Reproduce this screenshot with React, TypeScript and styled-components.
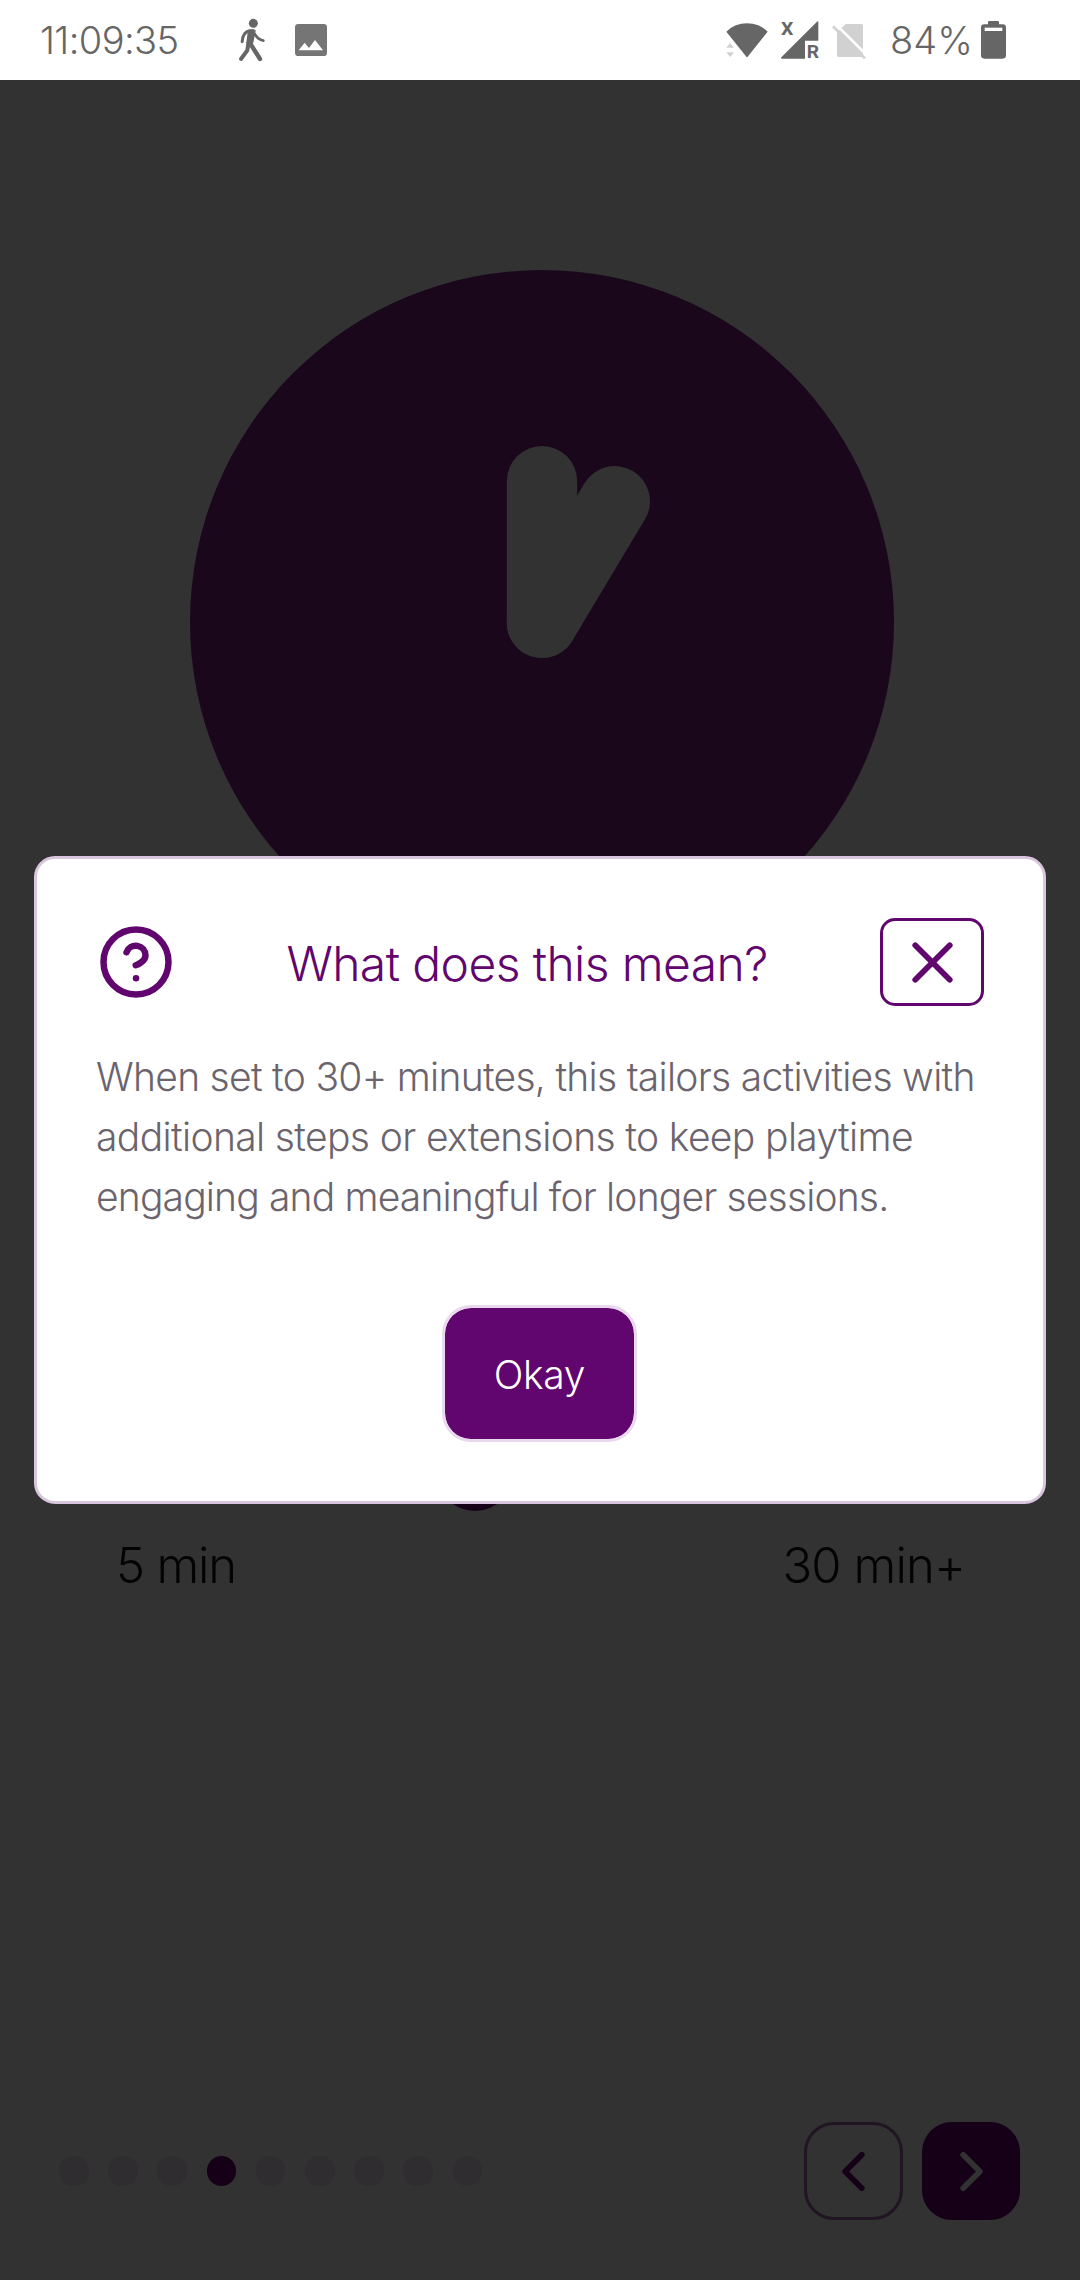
import React from "react";
import styled, { createGlobalStyle } from "styled-components";

const color = {
  purple: "#61056f",
  dimBackground: "#323232",
  dimClock: "#1a071c",
  dimPurple: "#150018",
  dimDot: "#302d30",
  statusIcon: "#666666",
  statusFaint: "#d1d1d1",
};

const GlobalStyle = createGlobalStyle`
  *, *::before, *::after { box-sizing: border-box; }
  body {
    margin: 0;
    background: ${color.dimBackground};
    font-family: Inter, "Liberation Sans", sans-serif;
    font-weight: 300;
  }
  button { font: inherit; padding: 0; background: none; border: 0; }
  svg { display: block; flex: none; }
`;

const Screen = styled.div`
  position: relative;
  width: 1080px;
  height: 2280px;
  display: flex;
  flex-direction: column;
  overflow: hidden;
`;

const StatusBar = styled.header`
  height: 80px;
  flex: none;
  display: flex;
  align-items: flex-start;
  padding: 0 74px 0 40px;
  background: #fff;
  color: ${color.statusIcon};
`;

const StatusText = styled.span<{ $spacing: number; $width: number }>`
  width: ${(p) => p.$width}px;
  padding-top: 10px;
  font-size: 38px;
  line-height: 60px;
  letter-spacing: ${(p) => p.$spacing}px;
  white-space: nowrap;
`;

const StatusSpacer = styled.div`
  flex: 1;
`;

const Page = styled.main`
  flex: 1;
  display: flex;
  flex-direction: column;
  padding-top: 190px;
  background: ${color.dimBackground};
`;

const ClockFace = styled.svg`
  width: 704px;
  height: 704px;
  margin-left: 190px;
`;

const Slider = styled.div`
  display: flex;
  margin-top: 459px;
  padding-left: 436px;
`;

const Thumb = styled.div`
  width: 78px;
  height: 78px;
  border-radius: 50%;
  background: ${color.dimPurple};
`;

const SliderLabels = styled.div`
  display: flex;
  justify-content: space-between;
  margin-top: 25px;
  padding: 0 115px 0 116px;
  font-size: 49px;
  line-height: 60px;
  color: #030303;
`;

const SliderLabel = styled.span<{ $spacing: number }>`
  letter-spacing: ${(p) => p.$spacing}px;
`;

const Footer = styled.footer`
  display: flex;
  align-items: center;
  justify-content: space-between;
  margin-top: auto;
  padding: 0 60px 60px 59px;
`;

const Dots = styled.div`
  display: flex;
  gap: 19.6px;
`;

const Dot = styled.span<{ $active: boolean }>`
  width: 29.6px;
  height: 29.6px;
  border-radius: 50%;
  background: ${(p) => (p.$active ? color.dimPurple : color.dimDot)};
`;

const NavButtons = styled.div`
  display: flex;
  gap: 19px;
`;

const NavButton = styled.button<{ $filled?: boolean }>`
  width: ${(p) => (p.$filled ? 98 : 99)}px;
  height: 98px;
  display: flex;
  align-items: center;
  justify-content: center;
  border-radius: 30px;
  border: 3px solid ${(p) => (p.$filled ? color.dimPurple : "#211423")};
  background: ${(p) => (p.$filled ? color.dimPurple : "transparent")};
  color: ${(p) => (p.$filled ? color.dimBackground : color.dimPurple)};
`;

const Overlay = styled.div`
  position: absolute;
  inset: 80px 0 0 0;
  display: flex;
  align-items: center;
  justify-content: center;
`;

const Dialog = styled.section`
  width: 1012px;
  height: 648px;
  display: flex;
  flex-direction: column;
  padding: 59px;
  border: 3px solid #d9c6de;
  border-radius: 21px;
  background: #fff;
`;

const DialogHeader = styled.div`
  display: flex;
  align-items: center;
  justify-content: space-between;
  height: 88px;
`;

const DialogTitle = styled.h2`
  margin: 3px 0 0;
  font-size: 48px;
  font-weight: 300;
  line-height: 60px;
  letter-spacing: -0.6px;
  white-space: nowrap;
  color: ${color.purple};
`;

const CloseButton = styled.button`
  width: 104px;
  height: 88px;
  display: flex;
  align-items: center;
  justify-content: center;
  border: 3px solid ${color.purple};
  border-radius: 15px;
  color: ${color.purple};
`;

const DialogBody = styled.p`
  display: flex;
  flex-direction: column;
  margin: 41px 0 0;
  font-size: 39px;
  line-height: 60px;
  color: #6b646d;
`;

const BodyLine = styled.span<{ $spacing: number }>`
  letter-spacing: ${(p) => p.$spacing}px;
  white-space: nowrap;
`;

const OkayButton = styled.button`
  align-self: center;
  width: 195px;
  height: 138px;
  margin: 78px 1px 0 0;
  padding-top: 2px;
  border: 3px solid #ead8ee;
  border-radius: 29px;
  background: ${color.purple};
  background-clip: padding-box;
  color: #fff;
  font-size: 39px;
  letter-spacing: -0.3px;
`;

type StrokeIconProps = { size: number; children: React.ReactNode };

const StrokeIcon = ({ size, children }: StrokeIconProps) => (
  <svg
    width={size}
    height={size}
    viewBox="0 0 24 24"
    fill="none"
    stroke="currentColor"
    strokeWidth="2"
    strokeLinecap="round"
    strokeLinejoin="round"
  >
    {children}
  </svg>
);

const HelpMark = styled.div`
  margin: 0 -1px 0 1px;
  color: ${color.purple};
`;

const WalkIcon = () => (
  <svg width="30" height="80" viewBox="0 0 90 240" fill="none" stroke={color.statusIcon} strokeLinecap="round" strokeLinejoin="round">
    <circle cx="52" cy="70" r="13.5" fill={color.statusIcon} stroke="none" />
    <path d="M36 92 50 89 57 92 50 128 43 138 33 128 37 98Z" fill={color.statusIcon} strokeWidth="4" />
    <path d="M41 92Q20 96 18.500 125" strokeWidth="9" />
    <path d="M56 102Q65 118 82 122" strokeWidth="8" />
    <path d="M37 130 34 151 15 177" strokeWidth="12" />
    <path d="M41 128 55 150 72 177" strokeWidth="13" />
  </svg>
);

const PictureIcon = () => (
  <svg width="32" height="80" viewBox="0 0 96 240">
    <rect y="72" width="96" height="96" rx="10" fill="#757575" />
    <path d="M11 151 29 128 42 144 60 120 84 151Z" fill="#fff" />
  </svg>
);

const WifiIcon = () => (
  <svg width="42" height="80" viewBox="0 0 126 240">
    <path d="M1 95A88 88 0 0 1 125 95L65 170Q63 172 61 170Z" fill={color.statusIcon} />
    <path d="M1 143 12.500 129 24 143ZM1 157H24L12.500 171Z" fill={color.statusFaint} />
  </svg>
);

const SignalIcon = () => (
  <svg width="38" height="80" viewBox="0 0 114 240" fill={color.statusIcon}>
    <path d="M2 176Q-1 175 1 172L108 65Q112 62 112 66V122H72V176Z" />
    <g fontFamily="Roboto, sans-serif" fontWeight="700">
      <text x="0" y="105" fontSize="57" textLength="37" lengthAdjust="spacingAndGlyphs">X</text>
      <text x="77" y="174" fontSize="54" textLength="37" lengthAdjust="spacingAndGlyphs">R</text>
    </g>
  </svg>
);

const NoSimIcon = () => (
  <svg width="35" height="80" viewBox="0 0 105 240">
    <path d="M15 97 41 72H88Q93 72 93 77V171H20Q15 171 15 166Z" fill={color.statusFaint} />
    <path d="M9 70 107 168" stroke="#fff" strokeWidth="8" />
    <path d="M3 79 99 175" stroke={color.statusFaint} strokeWidth="8" />
  </svg>
);

const BatteryIcon = () => (
  <svg width="25" height="80" viewBox="0 0 75 240">
    <path d="M21 73V67Q21 63 25 63H50Q54 63 54 67V73H65Q75 73 75 83V166Q75 176 65 176H10Q0 176 0 166V83Q0 73 10 73Z" fill={color.statusIcon} />
    <rect x="11" y="83" width="53" height="10" fill="#fff" />
  </svg>
);

const LeftIcons = styled.div`
  display: flex;
  gap: 29px;
`;

const RightIcons = styled.div`
  display: flex;
  gap: 13px;
`;

const BatteryGroup = styled.div`
  display: flex;
  margin-left: 23px;
`;

const bodyLines = [
  { text: "When set to 30+ minutes, this tailors activities with", spacing: -0.71 },
  { text: "additional steps or extensions to keep playtime", spacing: -0.63 },
  { text: "engaging and meaningful for longer sessions.", spacing: -0.83 },
];

const stepCount = 9;
const currentStep = 3;

export default function App() {
  return (
    <>
      <GlobalStyle />
      <Screen>
        <StatusBar>
          <StatusText $width={196} $spacing={-0.6}>11:09:35</StatusText>
          <LeftIcons>
            <WalkIcon />
            <PictureIcon />
          </LeftIcons>
          <StatusSpacer />
          <RightIcons>
            <WifiIcon />
            <SignalIcon />
            <NoSimIcon />
          </RightIcons>
          <BatteryGroup>
            <StatusText $width={91} $spacing={0}>84%</StatusText>
            <BatteryIcon />
          </BatteryGroup>
        </StatusBar>

        <Page>
          <ClockFace viewBox="0 0 704 704">
            <circle cx="352" cy="352" r="352" fill={color.dimClock} />
            <g stroke={color.dimBackground} strokeWidth="70.4" strokeLinecap="round">
              <line x1="352" y1="211.200" x2="352" y2="352.800" />
              <line x1="424.800" y1="231.200" x2="352" y2="352.800" />
            </g>
          </ClockFace>
          <Slider>
            <Thumb />
          </Slider>
          <SliderLabels>
            <SliderLabel $spacing={-1.2}>5 min</SliderLabel>
            <SliderLabel $spacing={-0.9}>30 min+</SliderLabel>
          </SliderLabels>
          <Footer>
            <Dots>
              {Array.from({ length: stepCount }, (_, i) => (
                <Dot key={i} $active={i === currentStep} />
              ))}
            </Dots>
            <NavButtons>
              <NavButton aria-label="Previous">
                <StrokeIcon size={67}><path d="m15 18-6-6 6-6" /></StrokeIcon>
              </NavButton>
              <NavButton $filled aria-label="Next">
                <StrokeIcon size={67}><path d="m9 18 6-6-6-6" /></StrokeIcon>
              </NavButton>
            </NavButtons>
          </Footer>
        </Page>

        <Overlay>
          <Dialog>
            <DialogHeader>
              <HelpMark>
                <StrokeIcon size={78}>
                  <circle cx="12" cy="12" r="10" />
                  <path d="M9.090 9a3 3 0 0 1 5.830 1c0 2-3 3-3 3" />
                  <path d="M12 17h.01" />
                </StrokeIcon>
              </HelpMark>
              <DialogTitle>What does this mean?</DialogTitle>
              <CloseButton aria-label="Close">
                <StrokeIcon size={69}>
                  <path d="M18 6 6 18" />
                  <path d="m6 6 12 12" />
                </StrokeIcon>
              </CloseButton>
            </DialogHeader>
            <DialogBody>
              {bodyLines.map((line) => (
                <BodyLine key={line.text} $spacing={line.spacing}>{line.text}</BodyLine>
              ))}
            </DialogBody>
            <OkayButton>Okay</OkayButton>
          </Dialog>
        </Overlay>
      </Screen>
    </>
  );
}
